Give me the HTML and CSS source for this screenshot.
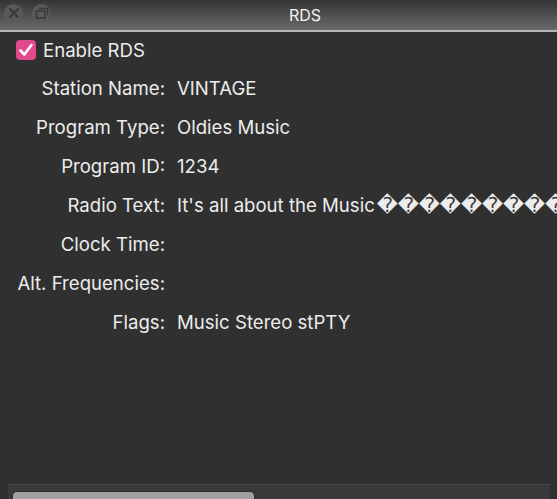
FILE: index.html
```html
<!DOCTYPE html>
<html>
<head>
<meta charset="utf-8">
<link rel="stylesheet" href="styles.css">
</head>
<body>
<div class="window">
  <div class="titlebar">
    <div class="buttons">
      <span class="tbtn">
        <svg width="12" height="12" viewBox="0 0 12 12"><path d="M2 2L10 10M10 2L2 10" stroke="#3a3a3a" stroke-width="2.2" stroke-linecap="round"/></svg>
      </span>
      <span class="tbtn">
        <svg width="14" height="12" viewBox="0 0 14 12"><path d="M4 1.5H12.5V8" fill="none" stroke="#3a3a3a" stroke-width="1.6"/><rect x="1.5" y="4" width="8.5" height="7" fill="none" stroke="#3a3a3a" stroke-width="1.6"/></svg>
      </span>
    </div>
    <div class="title">RDS</div>
  </div>
  <div class="content">
    <label class="enable">
      <span class="check">
        <svg width="20" height="20" viewBox="0 0 20 20"><path d="M4.5 10.5L8.3 14.5L15.5 5" fill="none" stroke="#fff" stroke-width="2.6" stroke-linecap="round" stroke-linejoin="round"/></svg>
      </span>
      <span class="enable-text">Enable RDS</span>
    </label>
    <div class="fields">
      <div class="lbl">Station Name:</div><div class="val">VINTAGE</div>
      <div class="lbl">Program Type:</div><div class="val">Oldies Music</div>
      <div class="lbl">Program ID:</div><div class="val">1234</div>
      <div class="lbl">Radio Text:</div><div class="val">It's all about the Music<span class="repl">&#xFFFD;&#xFFFD;&#xFFFD;&#xFFFD;&#xFFFD;&#xFFFD;&#xFFFD;&#xFFFD;&#xFFFD;&#xFFFD;&#xFFFD;&#xFFFD;&#xFFFD;</span></div>
      <div class="lbl">Clock Time:</div><div class="val"></div>
      <div class="lbl">Alt. Frequencies:</div><div class="val"></div>
      <div class="lbl">Flags:</div><div class="val">Music Stereo stPTY</div>
    </div>
  </div>
  <div class="bottom">
    <div class="thumb"></div>
  </div>
</div>
</body>
</html>
```
FILE: styles.css
```css
html, body {
  margin: 0;
  padding: 0;
  background: #303030;
}
.window {
  width: 557px;
  height: 499px;
  overflow: hidden;
  display: flex;
  flex-direction: column;
  font-family: "Inter", "DejaVu Sans", sans-serif;
  color: #ececec;
}
.titlebar {
  height: 30px;
  flex: none;
  background: linear-gradient(#343434, #6a6a6a);
  border-bottom: 2px solid #b4b4b4;
  position: relative;
  display: flex;
  align-items: center;
}
.buttons {
  display: flex;
  gap: 9px;
  padding-left: 4px;
  margin-top: -4px;
}
.tbtn {
  width: 19px;
  height: 19px;
  border-radius: 50%;
  background: #595959;
  display: flex;
  align-items: center;
  justify-content: center;
}
.title {
  position: absolute;
  left: 289px;
  top: 5px;
  font-size: 16px;
  color: #f2f2f2;
}
.content {
  flex: 1;
  padding: 8px 0 0 0;
  overflow: hidden;
}
.enable {
  display: flex;
  align-items: center;
  gap: 7px;
  padding-left: 16px;
  height: 20px;
}
.check {
  width: 20px;
  height: 20px;
  border-radius: 4px;
  background: #e04a8c;
  display: flex;
  flex: none;
}
.enable-text {
  font-size: 18.6px;
}
.fields {
  display: grid;
  grid-template-columns: 165px 1fr;
  column-gap: 12px;
  grid-auto-rows: 39px;
  margin-top: 8px;
  font-size: 18.6px;
  align-items: center;
}
.lbl {
  text-align: right;
  white-space: nowrap;
}
.val {
  white-space: nowrap;
  overflow: hidden;
}
.repl {
  font-family: "DejaVu Sans", sans-serif;
  font-size: 20.5px;
  margin-left: 2px;
}
.bottom {
  flex: none;
  height: 8px;
  margin: 0 7px 0 8px;
  background: #393939;
  border-top: 1px solid #474747;
  padding: 6px 0 0 4px;
  overflow: hidden;
}
.thumb {
  width: 241px;
  height: 20px;
  background: #a0a0a0;
  border: 1px solid #2a2a2a;
  border-radius: 5px 5px 0 0;
}
```
